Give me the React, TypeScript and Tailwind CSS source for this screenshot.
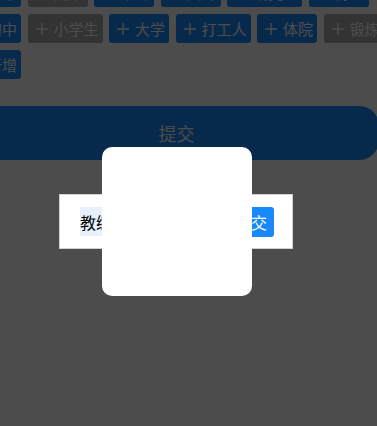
import * as React from 'react';

interface Tag {
  label: string;
  active: boolean;
}

const tags: Tag[] = [
  { label: '初中', active: true },
  { label: '高中', active: false },
  { label: '中专', active: true },
  { label: '大专', active: true },
  { label: '研究生', active: true },
  { label: '博士', active: true },
  { label: '初中', active: true },
  { label: '小学生', active: false },
  { label: '大学', active: true },
  { label: '打工人', active: true },
  { label: '体院', active: true },
  { label: '锻炼', active: false },
  { label: '新增', active: true },
];

function PlusIcon() {
  return (
    <svg width="12" height="12" viewBox="0 0 12 12" className="shrink-0 mr-[6px]">
      <path d="M6 0v12M0 6h12" stroke="currentColor" strokeWidth="1.3" fill="none" />
    </svg>
  );
}

function TagButton({ tag }: { tag: Tag }) {
  return (
    <button
      className={
        'flex items-center h-[29px] pl-[8px] pr-[4px] rounded-[3px] text-[15px] leading-none text-white whitespace-nowrap ' +
        (tag.active ? 'bg-[#1989fa]' : 'bg-[#aaaaaa]')
      }
    >
      <PlusIcon />
      {tag.label}
    </button>
  );
}

export default function App() {
  return (
    <div
      className="relative w-[377px] h-[426px] overflow-hidden bg-white"
      style={{ fontFamily: '"Noto Sans CJK SC", "Liberation Sans", sans-serif' }}
    >
      {/* page content, scrolled */}
      <div className="-mt-[22px] -ml-[39px] w-[430px]">
        <div className="flex flex-wrap gap-x-[6.5px] gap-y-[7px] w-[425px]">
          {tags.map((t, i) => (
            <TagButton key={i} tag={t} />
          ))}
        </div>
        <div className="mt-[27px] ml-[13px]">
          <button className="w-[405px] h-[54px] rounded-[20px] bg-[#1989fa] text-white text-[18px] leading-none">
            提交
          </button>
        </div>
      </div>

      {/* overlay */}
      <div className="absolute inset-0 bg-black/70" />

      {/* input bar */}
      <div className="absolute left-[59px] top-[194px] w-[234px] h-[55px] bg-white border border-[#d0d0d0] flex items-center pl-[20px] pr-[18px]">
        <div className="flex-1 h-[29px] flex items-center">
          <span className="bg-[#e8f0fe] h-[29px] flex items-center pr-[40px] text-[16px] text-black">教练</span>
        </div>
        <button className="h-[30px] px-[7px] rounded-[3px] bg-[#1989fa] text-white text-[16px] leading-none">提交</button>
      </div>

      {/* loading box */}
      <div className="absolute left-[102px] top-[147px] w-[150px] h-[149px] bg-white rounded-[10px]" />
    </div>
  );
}
